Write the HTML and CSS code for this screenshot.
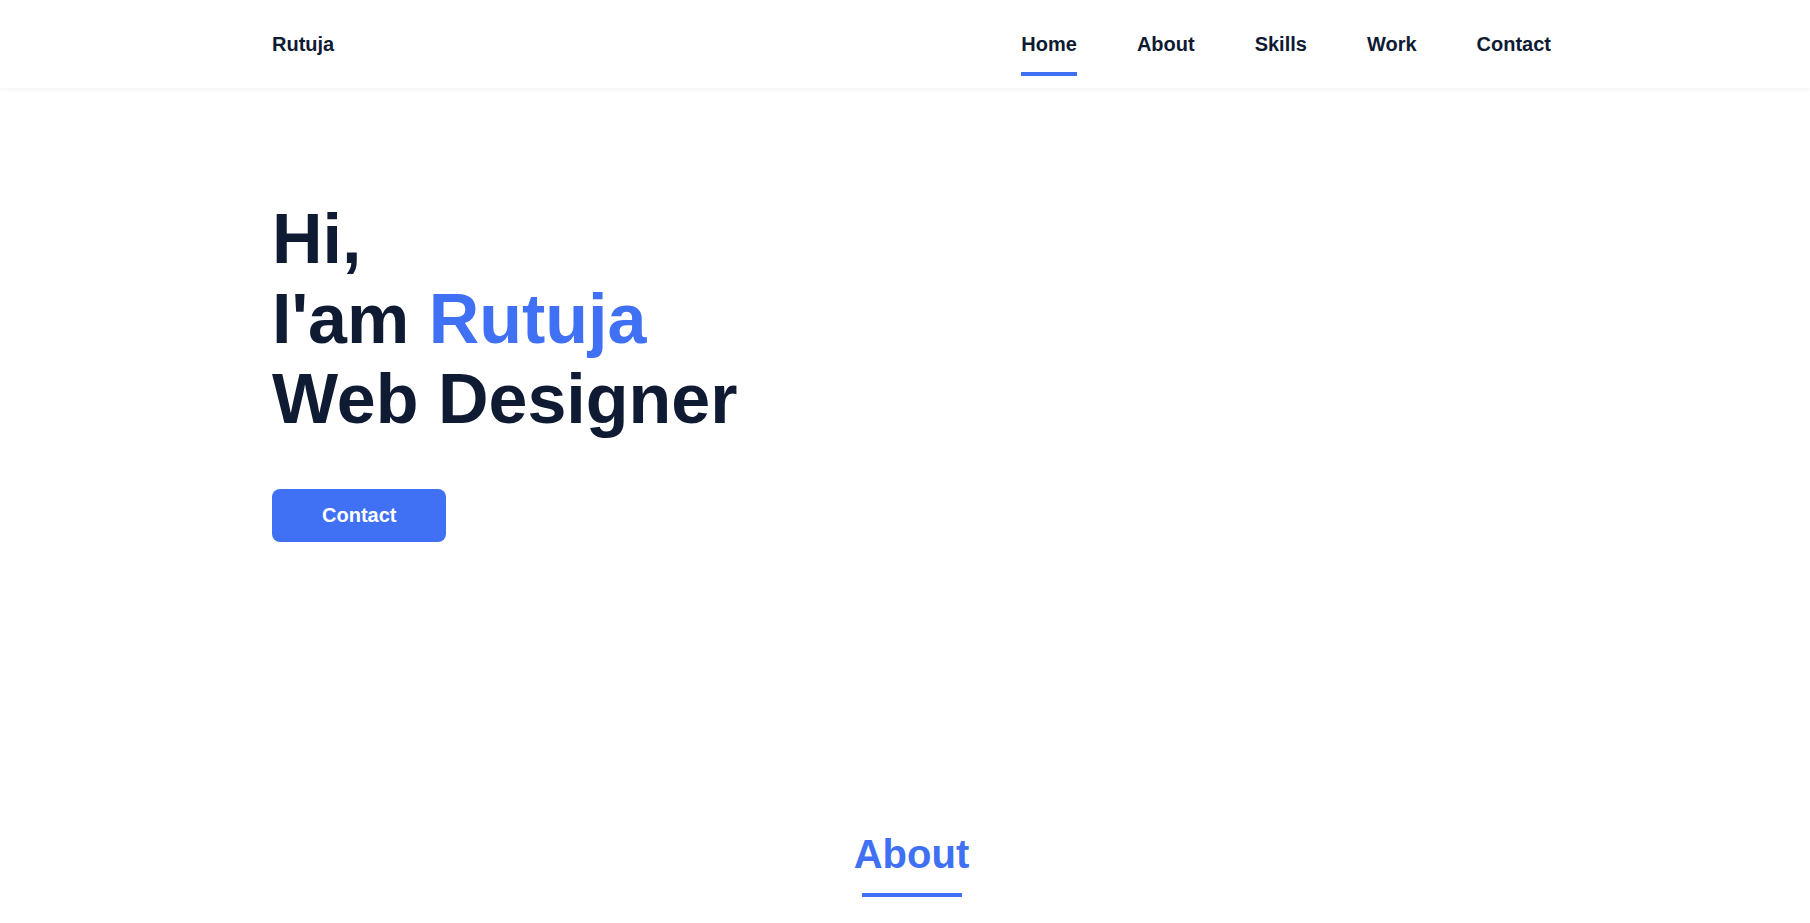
FILE: index.html
```html
<!DOCTYPE html>
<html lang="en">
<head>
<meta charset="utf-8">
<title>Rutuja</title>
<link rel="stylesheet" href="styles.css">
</head>
<body>
<header class="header">
  <nav class="nav">
    <a class="nav-logo" href="#">Rutuja</a>
    <ul class="nav-list">
      <li><a class="nav-link active" href="#home">Home</a></li>
      <li><a class="nav-link" href="#about">About</a></li>
      <li><a class="nav-link" href="#skills">Skills</a></li>
      <li><a class="nav-link" href="#work">Work</a></li>
      <li><a class="nav-link" href="#contact">Contact</a></li>
    </ul>
  </nav>
</header>
<main>
  <section class="home" id="home">
    <h1 class="home-title">Hi,<br>I'am <span class="accent">Rutuja</span><br>Web Designer</h1>
    <a class="button" href="#contact">Contact</a>
  </section>
  <section class="about" id="about">
    <h2 class="section-title">About</h2>
  </section>
</main>
</body>
</html>
```
FILE: styles.css
```css
* { box-sizing: border-box; }
html, body { margin: 0; padding: 0; }
body {
  font-family: "Liberation Sans", Arial, sans-serif;
  color: #0f1a33;
  background: #fff;
}
a { text-decoration: none; color: inherit; }
ul { list-style: none; margin: 0; padding: 0; }

.header {
  height: 88px;
  background: #fff;
  box-shadow: 0 1px 4px rgba(146, 161, 176, 0.15);
}
.nav {
  height: 88px;
  margin: 0 259px 0 272px;
  display: flex;
  align-items: center;
  justify-content: space-between;
}
.nav-logo {
  font-size: 20px;
  font-weight: 700;
  line-height: 23px;
}
.nav-list {
  display: flex;
  gap: 60px;
}
.nav-link {
  position: relative;
  display: block;
  font-size: 20px;
  font-weight: 700;
  line-height: 23px;
}
.nav-link.active::after {
  content: "";
  position: absolute;
  left: 0;
  right: 0;
  top: 39px;
  height: 4px;
  background: #4070f4;
}

.home {
  margin: 0 259px 0 272px;
  padding-top: 111px;
}
.home-title {
  margin: 0;
  font-size: 70px;
  line-height: 80px;
  font-weight: 700;
}
.accent { color: #4070f4; }
.button {
  display: inline-block;
  margin-top: 50px;
  padding: 15px 50px;
  background: #4070f4;
  color: #fff;
  font-size: 20px;
  font-weight: 700;
  line-height: 23px;
  border-radius: 8px;
}

.about {
  margin: 0 259px 0 272px;
  padding-top: 289px;
  padding-bottom: 200px;
}
.section-title {
  margin: 0;
  text-align: center;
  color: #4070f4;
  font-size: 40px;
  line-height: 46px;
  font-weight: 700;
}
.section-title::after {
  content: "";
  display: block;
  width: 100px;
  height: 4px;
  margin: 16px auto 0;
  background: #4070f4;
}
```
